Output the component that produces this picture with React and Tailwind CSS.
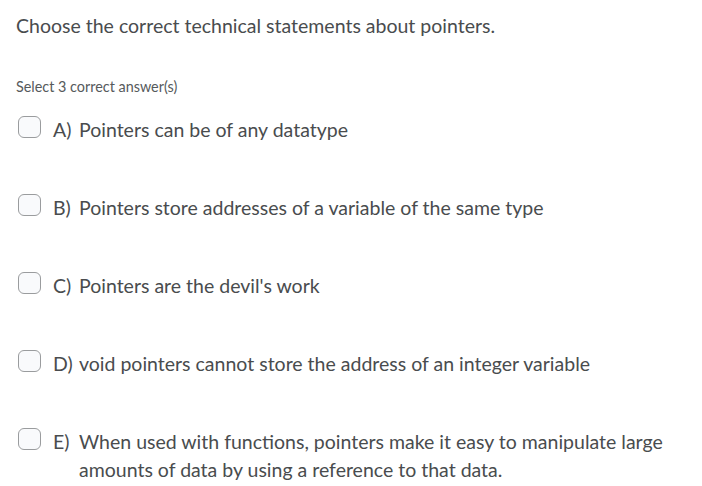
const options = [
  { letter: "A)", text: "Pointers can be of any datatype" },
  { letter: "B)", text: "Pointers store addresses of a variable of the same type" },
  { letter: "C)", text: "Pointers are the devil's work" },
  { letter: "D)", text: "void pointers cannot store the address of an integer variable" },
  {
    letter: "E)",
    text: "When used with functions, pointers make it easy to manipulate large amounts of data by using a reference to that data.",
  },
];

export default function App() {
  return (
    <div
      className="w-[702px] h-[486px] bg-white text-[#494c4e] overflow-hidden"
      style={{ fontFamily: "Lato, 'Open Sans', sans-serif" }}
    >
      <div className="pl-4 pt-[13px]">
        <p className="text-[19.5px] leading-[26px]">
          Choose the correct technical statements about pointers.
        </p>
        <p className="mt-[38px] text-[14.4px] leading-[20px] text-[#565a5c]">
          Select 3 correct answer(s)
        </p>
        <div className="mt-[19px] flex flex-col gap-[50px]">
          {options.map((o) => (
            <label key={o.letter} className="flex items-start">
              <span className="ml-[2px] w-[23px] h-[22px] shrink-0 rounded-[6px] border border-[#9a9c9e] bg-[#f9fafc]" />
              <span className="ml-[12px] w-[26px] shrink-0 text-[19.5px] leading-[28px]">
                {o.letter}
              </span>
              <span className="w-[600px] text-[19.5px] leading-[28px]">{o.text}</span>
            </label>
          ))}
        </div>
      </div>
    </div>
  );
}
